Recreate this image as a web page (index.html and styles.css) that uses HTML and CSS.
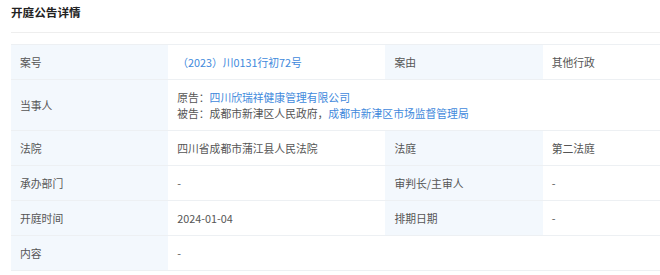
FILE: index.html
```html
<!DOCTYPE html>
<html lang="zh">
<head>
<meta charset="utf-8">
<link rel="stylesheet" href="styles.css">
</head>
<body>
<div class="page">
  <div class="title">开庭公告详情</div>
  <div class="rule"></div>
  <table class="detail">
    <colgroup>
      <col class="c-label"><col class="c-value"><col class="c-label"><col class="c-value">
    </colgroup>
    <tr class="r35">
      <td class="label">案号</td>
      <td class="value link">（2023）川0131行初72号</td>
      <td class="label">案由</td>
      <td class="value">其他行政</td>
    </tr>
    <tr class="r51">
      <td class="label">当事人</td>
      <td class="value party" colspan="3">
        <div>原告：<span class="link">四川欣瑞祥健康管理有限公司</span></div>
        <div>被告：成都市新津区人民政府，<span class="link">成都市新津区市场监督管理局</span></div>
      </td>
    </tr>
    <tr class="r35">
      <td class="label">法院</td>
      <td class="value">四川省成都市蒲江县人民法院</td>
      <td class="label">法庭</td>
      <td class="value">第二法庭</td>
    </tr>
    <tr class="r35">
      <td class="label">承办部门</td>
      <td class="value">-</td>
      <td class="label">审判长/主审人</td>
      <td class="value">-</td>
    </tr>
    <tr class="r35">
      <td class="label">开庭时间</td>
      <td class="value">2024-01-04</td>
      <td class="label">排期日期</td>
      <td class="value">-</td>
    </tr>
    <tr class="r35">
      <td class="label">内容</td>
      <td class="value" colspan="3">-</td>
    </tr>
  </table>
</div>
</body>
</html>
```

FILE: styles.css
```css
html, body {
  margin: 0;
  padding: 0;
  background: #ffffff;
  overflow: hidden;
}
body {
  font-family: "Noto Sans CJK SC", "Noto Sans", sans-serif;
  color: #333333;
}
.page {
  padding: 3px 0 0 11px;
  width: 760px;
}
.title {
  font-size: 11.6px;
  font-weight: bold;
  color: #222222;
  line-height: 18px;
}
.rule {
  margin-top: 11px;
  height: 1px;
  background: #eeeeee;
}
.detail {
  margin-top: 11px;
  border-collapse: collapse;
  table-layout: fixed;
  width: 749px;
  font-size: 10.8px;
  color: #555555;
}
.c-label { width: 157px; }
.c-value { width: 217px; }
.detail td {
  border-bottom: 1px solid #edf0f3;
  border-top: 1px solid #edf0f3;
  padding: 0 9px;
  vertical-align: middle;
  white-space: nowrap;
}
.r35 td { height: 34px; }
.r51 td { height: 50px; }
.label {
  background: #f3f8fd;
}
.value {
  background: #ffffff;
}
.link {
  color: #4189dc;
}
.party div {
  line-height: 16px;
}
```
